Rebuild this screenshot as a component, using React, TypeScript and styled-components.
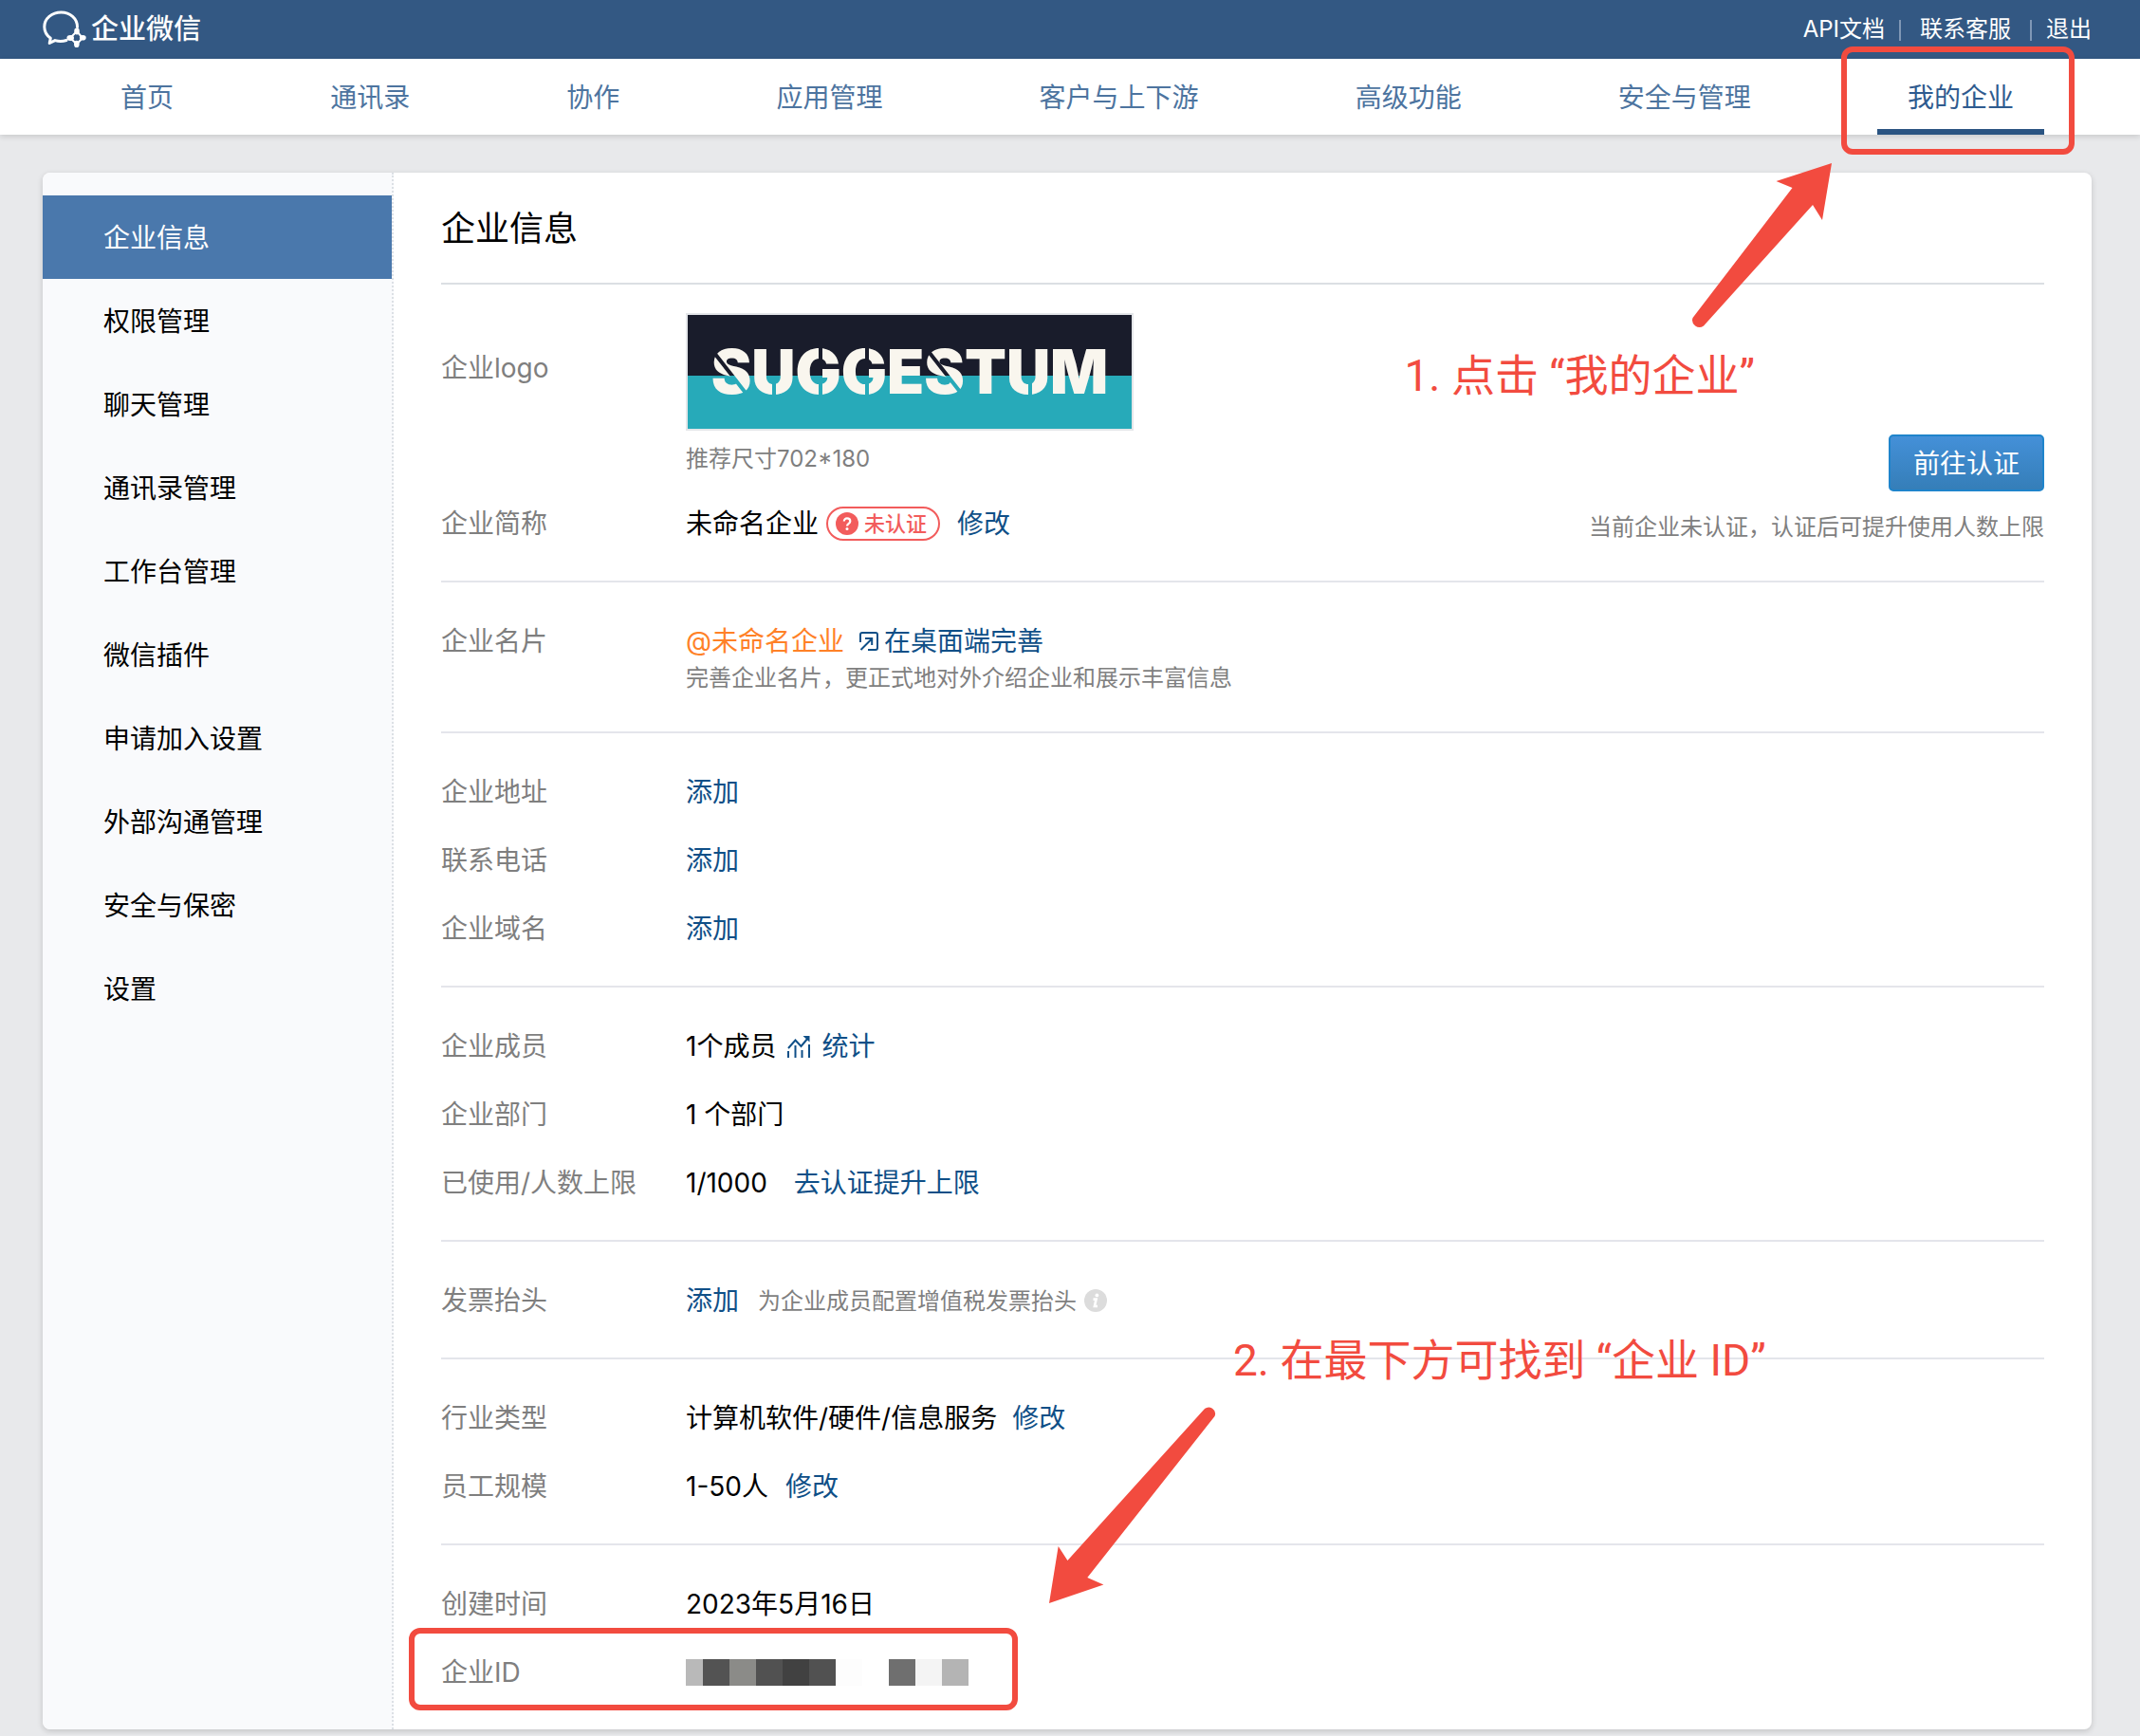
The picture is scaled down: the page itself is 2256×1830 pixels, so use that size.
import React from 'react';
import styled, { createGlobalStyle, css } from 'styled-components';

const color = {
  header: '#335883',
  navText: '#4d749f',
  navActive: '#2f5b8f',
  navBar: '#2b5482',
  page: '#e8e9eb',
  side: '#f9fafc',
  sideActive: '#4a78ac',
  link: '#0f4f87',
  label: '#7f7f7f',
  hint: '#7f7f7f',
  rule: '#e4e5eb',
  orange: '#ff8127',
  danger: '#f25c5c',
  mark: '#f24b3f',
};

const GlobalStyle = createGlobalStyle`
  *, *::before, *::after { box-sizing: border-box; }
  body {
    margin: 0;
    background: ${color.page};
    color: #000;
    font-family: Inter, "Noto Sans CJK SC", sans-serif;
    font-size: 28px;
    line-height: 42px;
  }
  ul, dl, dd, h1 { margin: 0; padding: 0; }
  ul { list-style: none; }
  a { color: inherit; text-decoration: none; }
  svg { display: block; flex: none; }
`;

/* ---------- header ---------- */

const TopBar = styled.header`
  display: flex;
  align-items: center;
  justify-content: space-between;
  height: 62px;
  padding: 0 51px 0 45px;
  background: ${color.header};
  color: #fff;
`;

const Brand = styled.a`
  display: flex;
  align-items: center;
  gap: 5px;
  font-size: 29px;
  font-weight: 500;
  line-height: 40px;
`;

const TopLinks = styled.ul`
  display: flex;
  align-items: center;
  font-size: 24px;
`;

const TopLink = styled.li<{ $middle?: boolean }>`
  display: flex;
  align-items: center;
  ${(p) =>
    p.$middle &&
    css`
      padding: 0 5px;
    `}
`;

const Divider = styled.li`
  width: 2px;
  height: 22px;
  margin: 2px 15px 0;
  background: #7f97b5;
`;

const NavBar = styled.nav`
  position: relative;
  z-index: 2;
  padding: 0 51px 0 45px;
  background: #fff;
  box-shadow: 0 2px 6px rgba(0, 0, 0, 0.14);
`;

const NavList = styled.ul`
  display: flex;
  justify-content: space-between;
  padding: 0 50px;
`;

const NavItem = styled.li<{ $active?: boolean }>`
  position: relative;
  display: flex;
  height: 80px;
  padding: 2px 32px 0;
  align-items: center;
  color: ${(p) => (p.$active ? color.navActive : color.navText)};
  box-shadow: ${(p) => (p.$active ? `inset 0 -6px ${color.navBar}` : 'none')};
`;

/* ---------- layout ---------- */

const Page = styled.main`
  padding: 40px 51px 6px 45px;
`;

const Card = styled.div`
  position: relative;
  display: flex;
  background: #fff;
  border-radius: 8px;
  box-shadow: 0 2px 6px rgba(0, 0, 0, 0.16);
`;

const Sidebar = styled.aside`
  flex: none;
  width: 370px;
  padding-top: 24px;
  background: ${color.side};
  border-right: 2px dotted #dce0e5;
  border-radius: 8px 0 0 8px;
`;

const SideLink = styled.a<{ $active?: boolean }>`
  display: flex;
  align-items: center;
  height: 88px;
  padding: 2px 0 0 64px;
  background: ${(p) => (p.$active ? color.sideActive : 'transparent')};
  color: ${(p) => (p.$active ? '#fff' : '#000')};
`;

const Content = styled.div`
  flex: 1;
  min-width: 0;
  padding: 0 50px;
`;

const Title = styled.h1`
  display: flex;
  align-items: center;
  height: 118px;
  padding-top: 2px;
  border-bottom: 2px solid #dbdfe3;
  font-size: 36px;
  font-weight: 400;
`;

const Section = styled.section<{ $tight?: boolean }>`
  display: flex;
  justify-content: space-between;
  align-items: flex-end;
  padding: ${(p) => (p.$tight ? '30px 0 39px' : '41px 0 39px')};
  &:not(:last-child) {
    border-bottom: 2px solid ${color.rule};
  }
`;

const Fields = styled.dl`
  display: flex;
  flex-direction: column;
  gap: 30px;
`;

const Field = styled.div`
  position: relative;
  display: flex;
`;

const Label = styled.dt<{ $tall?: boolean }>`
  flex: none;
  width: 258px;
  padding-top: ${(p) => (p.$tall ? '37px' : '0')};
  color: ${color.label};
`;

const Line = styled.div<{ $gap?: number }>`
  display: flex;
  align-items: center;
  height: 42px;
  gap: ${(p) => p.$gap ?? 16}px;
`;

const Link = styled.a`
  display: inline-flex;
  align-items: center;
  gap: 6px;
  color: ${color.link};
`;

const StatsLink = styled(Link)`
  gap: 12px;
`;

const Mention = styled.a`
  color: ${color.orange};
`;

const Hint = styled.p<{ $spaced?: boolean }>`
  margin: ${(p) => (p.$spaced ? '12px 0 0' : '0')};
  font-size: 24px;
  line-height: 35px;
  color: ${color.hint};
`;

const WithInfo = styled.div`
  display: flex;
  align-items: center;
  gap: 8px;
`;

const LogoFrame = styled.div`
  width: 472px;
  padding: 2px;
  background: #e4e6e9;
`;

const Badge = styled.span`
  display: inline-flex;
  align-items: center;
  gap: 6px;
  height: 36px;
  padding: 0 12px 0 8px;
  border: 2px solid ${color.danger};
  border-radius: 18px;
  color: ${color.danger};
  font-size: 22px;
  font-weight: 500;
  line-height: 32px;
`;

const NameGroup = styled.span`
  display: inline-flex;
  align-items: center;
  gap: 8px;
`;

const Verify = styled.div`
  display: flex;
  flex-direction: column;
  align-items: flex-end;
  gap: 20px;
`;

const PrimaryButton = styled.button`
  height: 60px;
  padding: 2px 24px 0;
  border: 2px solid #1f84cb;
  border-radius: 5px;
  background: linear-gradient(#4490d8, #357eb8);
  color: #fff;
  font: inherit;
`;

const Mosaic = styled.div`
  display: flex;
  height: 28px;
`;

const Tile = styled.span<{ $tone: string }>`
  width: 28px;
  background: ${(p) => p.$tone};
  &:first-child {
    width: 18px;
  }
`;

/* ---------- annotations drawn over the page ---------- */

const markFrame = css`
  position: absolute;
  border: 6px solid ${color.mark};
  border-radius: 12px;
  pointer-events: none;
`;

const NavFrame = styled.span`
  ${markFrame}
  top: -13px;
  right: -32px;
  bottom: -21px;
  left: -38px;
`;

const IdFrame = styled.span`
  ${markFrame}
  top: -26px;
  left: -34px;
  width: 642px;
  height: 87px;
`;

const Note = styled.p`
  position: absolute;
  margin: 0;
  color: ${color.mark};
  font-family: Roboto, "Noto Sans CJK SC", sans-serif;
  font-size: 46px;
  line-height: 60px;
  white-space: nowrap;
`;

const NavNote = styled(Note)`
  top: 184px;
  right: 355px;
`;

const IdNote = styled(Note)`
  top: 1222px;
  left: 1255px;
`;

const NavArrow = styled.svg`
  position: absolute;
  top: -10px;
  right: 273px;
`;

const IdArrow = styled.svg`
  position: absolute;
  top: 1301px;
  left: 1061px;
`;

/* ---------- icons ---------- */

const BrandIcon = () => (
  <svg width="46" height="40" viewBox="0 0 46 40" fill="none" aria-hidden="true">
    <path
      d="M36.5 17.5C36.5 8.500 29 2 19.500 2C9.500 2 1.800 8.800 1.800 17.200C1.800 22.200 4.500 26.500 8.300 29.200L7.200 34.500L13 31.600C17 32.800 21 32.800 25 31.500"
      stroke="#fff"
      strokeWidth="3"
      strokeLinecap="round"
      strokeLinejoin="round"
    />
    <path d="M36 22L42 29L36 35.500L29 29Z" stroke="#fff" strokeWidth="2" />
    <ellipse cx="36" cy="22" rx="2.800" ry="3.400" fill="#fff" />
    <ellipse cx="42.300" cy="28.800" rx="3.400" ry="2.800" fill="#fff" />
    <ellipse cx="35.800" cy="35.400" rx="2.800" ry="3.600" fill="#fff" />
    <ellipse cx="29.200" cy="29" rx="3.800" ry="3" fill="#fff" />
  </svg>
);

const QuestionIcon = () => (
  <svg width="24" height="24" viewBox="0 0 24 24" fill="none" aria-hidden="true">
    <circle cx="12" cy="12" r="12" fill={color.danger} />
    <path d="M8.800 9.600C8.800 7.600 10.200 6.400 12 6.400C13.900 6.400 15.300 7.600 15.300 9.400C15.300 11.800 12 11.800 12 14.600" stroke="#fff" strokeWidth="2.200" />
    <circle cx="12" cy="17.600" r="1.500" fill="#fff" />
  </svg>
);

const OpenIcon = () => (
  <svg width="20" height="20" viewBox="0 0 20 20" fill="none" stroke={color.link} strokeWidth="2" aria-hidden="true">
    <path d="M1 11V3Q1 1 3 1H17Q19 1 19 3V17Q19 19 17 19H9" />
    <path d="M1.500 19L13 7.500M6 7H13.200V14" />
  </svg>
);

const ChartIcon = () => (
  <svg width="24" height="24" viewBox="0 0 24 24" fill="none" stroke={color.link} strokeWidth="2" aria-hidden="true">
    <path d="M1 14L8.500 5.500L14.500 12L22 3" />
    <path d="M16.500 1H23.500V7.500Z" fill={color.link} stroke="none" />
    <path d="M1 17V24M8.500 11V24M15.500 16V24M23 10V24" />
  </svg>
);

const InfoIcon = () => (
  <svg width="24" height="24" viewBox="0 0 24 24" fill="none" aria-hidden="true">
    <circle cx="12" cy="12" r="12" fill="#dcdcdc" />
    <circle cx="13.400" cy="6.400" r="1.900" fill="#fff" />
    <path d="M9.500 10.600H12.600L10.900 18H14" stroke="#fff" strokeWidth="2.600" />
  </svg>
);

const CompanyLogo = () => (
  <svg width="468" height="120" viewBox="0 0 468 120" role="img" aria-label="Suggestum">
    <defs>
      <mask id="stencil">
        <text x="234" y="83" textAnchor="middle" fill="#fff" fontFamily="Inter, sans-serif" fontSize="64" fontWeight="900">
          SUGGESTUM
        </text>
        <path d="M28 40L64 86M255 40L291 86M91 34V90M140 34V90M189 34V90M361 34V90" stroke="#000" strokeWidth="4" />
      </mask>
    </defs>
    <rect width="468" height="64" fill="#191c2b" />
    <rect y="64" width="468" height="56" fill="#27aab9" />
    <rect width="468" height="120" fill="#f9f6ee" mask="url(#stencil)" />
  </svg>
);

/* ---------- content ---------- */

const navItems = ['首页', '通讯录', '协作', '应用管理', '客户与上下游', '高级功能', '安全与管理', '我的企业'];

const sideItems = ['企业信息', '权限管理', '聊天管理', '通讯录管理', '工作台管理', '微信插件', '申请加入设置', '外部沟通管理', '安全与保密', '设置'];

const tiles = ['#b9b9b9', '#535353', '#8b8b88', '#515151', '#414141', '#515151', '#fdfdfd', '#ffffff', '#6f6f6f', '#f4f4f4', '#b4b4b4'];

type RowProps = { label: string; tall?: boolean; children: React.ReactNode; mark?: React.ReactNode };

const Row = ({ label, tall, children, mark }: RowProps) => (
  <Field>
    <Label $tall={tall}>{label}</Label>
    <dd>{children}</dd>
    {mark}
  </Field>
);

export default function App() {
  return (
    <>
      <GlobalStyle />
      <TopBar>
        <Brand href="#home">
          <BrandIcon />
          企业微信
        </Brand>
        <TopLinks>
          <TopLink>
            <a href="#api">API文档</a>
          </TopLink>
          <Divider role="separator" />
          <TopLink $middle>
            <a href="#service">联系客服</a>
          </TopLink>
          <Divider role="separator" />
          <TopLink>
            <a href="#logout">退出</a>
          </TopLink>
        </TopLinks>
      </TopBar>
      <NavBar>
        <NavList>
          {navItems.map((item) => {
            const active = item === '我的企业';
            return (
              <NavItem key={item} $active={active}>
                <a href="#nav">{item}</a>
                {active && <NavFrame />}
              </NavItem>
            );
          })}
        </NavList>
      </NavBar>
      <Page>
        <Card>
          <Sidebar>
            {sideItems.map((item, i) => (
              <SideLink key={item} href="#side" $active={i === 0}>
                {item}
              </SideLink>
            ))}
          </Sidebar>
          <Content>
            <Title>企业信息</Title>
            <Section $tight>
              <Fields>
                <Row label="企业logo" tall>
                  <LogoFrame>
                    <CompanyLogo />
                  </LogoFrame>
                  <Hint $spaced>推荐尺寸702*180</Hint>
                </Row>
                <Row label="企业简称">
                  <Line $gap={18}>
                    <NameGroup>
                      未命名企业
                      <Badge>
                        <QuestionIcon />
                        未认证
                      </Badge>
                    </NameGroup>
                    <Link href="#rename">修改</Link>
                  </Line>
                </Row>
              </Fields>
              <Verify>
                <PrimaryButton type="button">前往认证</PrimaryButton>
                <Hint>当前企业未认证，认证后可提升使用人数上限</Hint>
              </Verify>
            </Section>
            <Section>
              <Fields>
                <Row label="企业名片">
                  <Line>
                    <Mention href="#card">@未命名企业</Mention>
                    <Link href="#desktop">
                      <OpenIcon />
                      在桌面端完善
                    </Link>
                  </Line>
                  <Hint>完善企业名片，更正式地对外介绍企业和展示丰富信息</Hint>
                </Row>
              </Fields>
            </Section>
            <Section>
              <Fields>
                {['企业地址', '联系电话', '企业域名'].map((label) => (
                  <Row key={label} label={label}>
                    <Link href="#add">添加</Link>
                  </Row>
                ))}
              </Fields>
            </Section>
            <Section>
              <Fields>
                <Row label="企业成员">
                  <Line $gap={12}>
                    1个成员
                    <StatsLink href="#stats">
                      <ChartIcon />
                      统计
                    </StatsLink>
                  </Line>
                </Row>
                <Row label="企业部门">1 个部门</Row>
                <Row label="已使用/人数上限">
                  <Line $gap={28}>
                    1/1000
                    <Link href="#verify">去认证提升上限</Link>
                  </Line>
                </Row>
              </Fields>
            </Section>
            <Section>
              <Fields>
                <Row label="发票抬头">
                  <Line $gap={20}>
                    <Link href="#invoice">添加</Link>
                    <WithInfo>
                      <Hint>为企业成员配置增值税发票抬头</Hint>
                      <InfoIcon />
                    </WithInfo>
                  </Line>
                </Row>
              </Fields>
            </Section>
            <Section>
              <Fields>
                <Row label="行业类型">
                  <Line>
                    计算机软件/硬件/信息服务
                    <Link href="#industry">修改</Link>
                  </Line>
                </Row>
                <Row label="员工规模">
                  <Line $gap={18}>
                    1-50人
                    <Link href="#size">修改</Link>
                  </Line>
                </Row>
              </Fields>
            </Section>
            <Section>
              <Fields>
                <Row label="创建时间">2023年5月16日</Row>
                <Row label="企业ID" mark={<IdFrame />}>
                  <Line>
                    <Mosaic>
                      {tiles.map((tone, i) => (
                        <Tile key={i} $tone={tone} />
                      ))}
                    </Mosaic>
                  </Line>
                </Row>
              </Fields>
            </Section>
          </Content>
          <NavArrow width="149" height="174" viewBox="0 0 149 174" fill={color.mark} aria-hidden="true">
            <path d="M148 0L89.500 19L106.500 26L1.500 163A7.500 7.500 0 0 0 13 171.500L128 44L138 60Z" />
          </NavArrow>
          <NavNote>1. 点击 “我的企业”</NavNote>
          <IdArrow width="176" height="208" viewBox="0 0 176 208" fill={color.mark} aria-hidden="true">
            <path d="M0 207L9.700 147L19.400 162L163.500 2.500A6.800 6.800 0 0 1 174.500 10L40.300 180L57.400 187.500Z" />
          </IdArrow>
          <IdNote>2. 在最下方可找到 “企业 ID”</IdNote>
        </Card>
      </Page>
    </>
  );
}
